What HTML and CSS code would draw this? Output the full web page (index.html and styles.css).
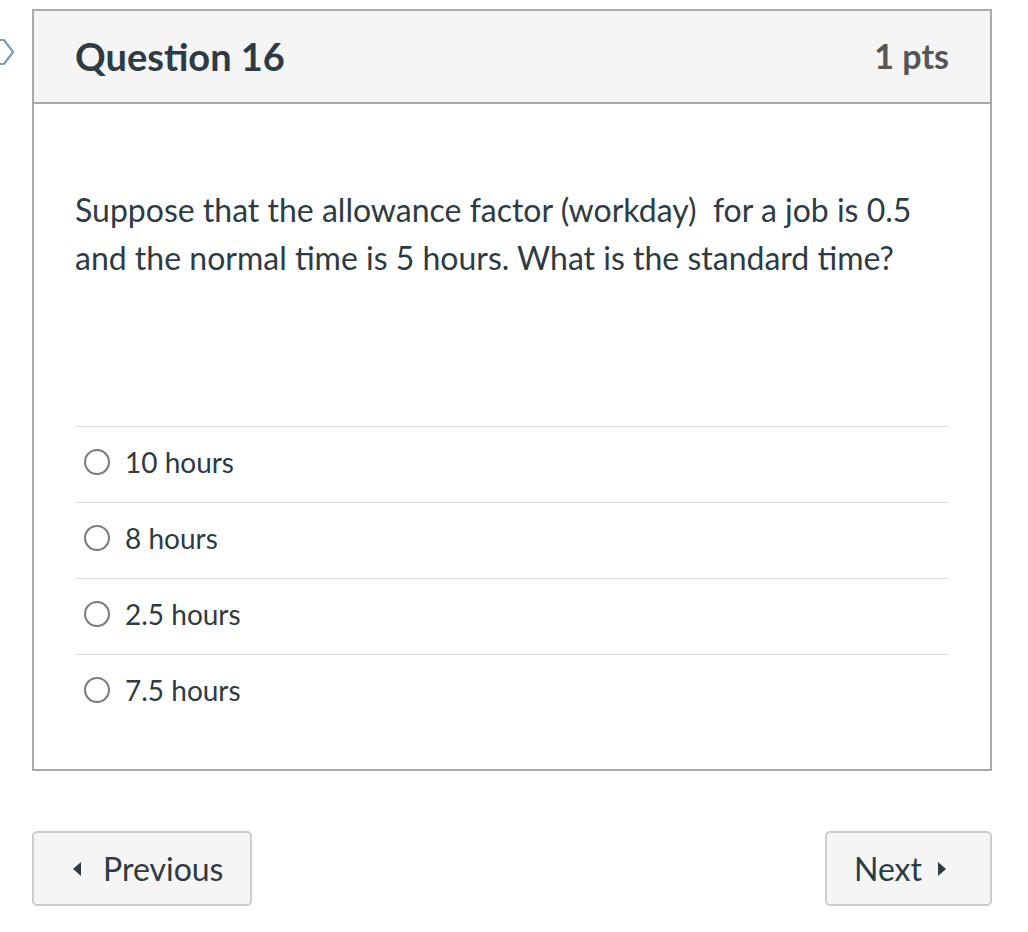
FILE: index.html
```html
<!DOCTYPE html>
<html>
<head>
<meta charset="utf-8">
<link rel="stylesheet" href="styles.css">
</head>
<body>
<div class="page">
  <div class="side">
    <svg class="chev" width="16" height="30" viewBox="0 0 16 30"><path d="M-2 3 H4 L13 15 L4 27 H-2" fill="none" stroke="#7f9cb3" stroke-width="2.2" stroke-linejoin="round"/></svg>
  </div>
  <div class="main">
    <div class="quiz">
      <div class="qhead">
        <span class="qtitle">Question 16</span>
        <span class="qpts">1 pts</span>
      </div>
      <div class="qbody">
        <p class="qtext">Suppose that the allowance factor (workday)&nbsp; for a job is 0.5 and the normal time is 5 hours. What is the standard time?</p>
        <div class="answers">
          <label class="ans"><span class="radio"></span><span>10 hours</span></label>
          <label class="ans"><span class="radio"></span><span>8 hours</span></label>
          <label class="ans"><span class="radio"></span><span>2.5 hours</span></label>
          <label class="ans"><span class="radio"></span><span>7.5 hours</span></label>
        </div>
      </div>
    </div>
    <div class="nav">
      <button class="btn prev"><span class="tri tri-l"></span>Previous</button>
      <button class="btn next">Next<span class="tri tri-r"></span></button>
    </div>
  </div>
</div>
</body>
</html>
```

FILE: styles.css
```css
* { box-sizing: border-box; }
html, body { margin: 0; padding: 0; background: #fff; }
body { font-family: Lato, "Open Sans", sans-serif; color: #2d3b45; }
.page { display: flex; padding-top: 9px; }
.side { width: 32px; flex: none; padding-top: 28px; }
.chev { display: block; }
.main { width: 960px; flex: none; }
.quiz { border: 2px solid #aaaaaa; }
.qhead {
  height: 93px;
  background: #f5f5f5;
  border-bottom: 2px solid #aaaaaa;
  display: flex;
  align-items: center;
  justify-content: space-between;
  padding: 0 41px 2px;
}
.qtitle { font-size: 38px; font-weight: 700; color: #2d3b45; }
.qpts { font-size: 34px; font-weight: 700; color: #565656; }
.qbody { padding: 82px 41px 39px; }
.qtext { margin: 0 0 144px; font-size: 32px; line-height: 48px; }
.ans {
  display: flex;
  align-items: center;
  height: 76px;
  border-top: 1px solid #dcdcdc;
  font-size: 28px;
  padding-left: 9px;
  padding-bottom: 5px;
}
.radio {
  width: 26px; height: 26px;
  border: 2px solid #7a7a7a;
  border-radius: 50%;
  margin-right: 15px;
  flex: none;
}
.nav { display: flex; justify-content: space-between; margin-top: 60px; }
.btn {
  font-family: Lato, "Open Sans", sans-serif;
  color: #2d3b45;
  background: #f5f5f5;
  border: 2px solid #c7cdd1;
  border-radius: 5px;
  height: 75px;
  font-size: 32px;
  display: flex;
  align-items: center;
  padding: 0;
}
.prev { width: 220px; padding-left: 39px; }
.next { width: 167px; padding-left: 27px; }
.tri { width: 0; height: 0; border-top: 7px solid transparent; border-bottom: 7px solid transparent; }
.tri-l { border-right: 8px solid #2d3b45; margin-right: 22px; }
.tri-r { border-left: 8px solid #2d3b45; margin-left: 16px; }
```
